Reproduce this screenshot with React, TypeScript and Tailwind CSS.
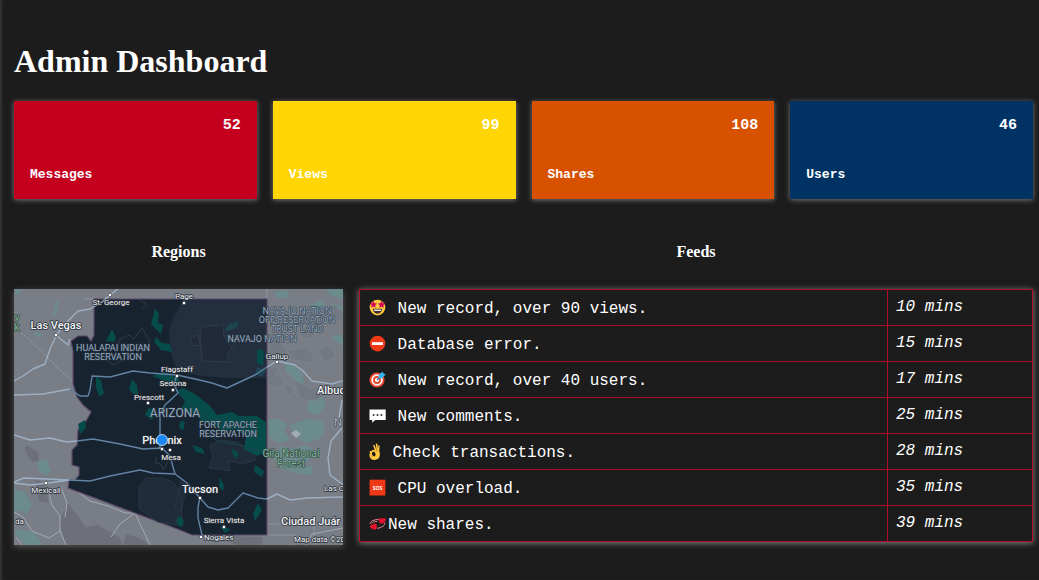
import type { ReactNode } from "react";

const stats = [
  { label: "Messages", value: 52, color: "bg-[#c5001f]" },
  { label: "Views", value: 99, color: "bg-[#ffd504]" },
  { label: "Shares", value: 108, color: "bg-[#d75100]" },
  { label: "Users", value: 46, color: "bg-[#003364]" },
];

function Icon({ children, narrow = false }: { children: ReactNode; narrow?: boolean }) {
  return (
    <svg
      aria-hidden="true"
      viewBox={narrow ? "0 0 11 18" : "0 0 17 18"}
      className={narrow ? "mr-[3px] h-[18px] w-[11px] shrink-0" : "mr-[2px] h-[18px] w-[17px] shrink-0"}
    >
      {children}
    </svg>
  );
}

const starPath = "M0-3.4 1-1.1 3.4-.9 1.6.7 2.1 3.1 0 1.8-2.1 3.1-1.6.7-3.4-.9-1-1.1Z";

const starStruck = (
  <Icon>
    <circle cx="8.5" cy="8.6" r="7.8" fill="#ffc83d" />
    <path d={starPath} transform="translate(4.4 5.4) scale(1.1)" fill="#d1005f" />
    <path d={starPath} transform="translate(12.6 5.4) scale(1.1)" fill="#d1005f" />
    <path d="M3.8 9.800h9.400c0 3-2 4.900-4.700 4.900s-4.700-1.900-4.700-4.900Z" fill="#402a32" />
    <path d="M4.900 10.600h7.200v1.300H4.900Z" fill="#fff" />
  </Icon>
);

const noEntry = (
  <Icon>
    <circle cx="8.5" cy="8.600" r="7.800" fill="#f03a17" />
    <rect x="3" y="7.200" width="11" height="2.800" fill="#fff" />
  </Icon>
);

const target = (
  <Icon>
    <circle cx="8" cy="9" r="7.600" fill="#e9482f" />
    <circle cx="8" cy="9" r="5.700" fill="#fff" />
    <circle cx="8" cy="9" r="4" fill="#e9482f" />
    <circle cx="8" cy="9" r="2.100" fill="#fff" />
    <path d="M8 9 13 4" stroke="#1b6fa8" strokeWidth="1.200" />
    <path d="M9.600 7.400V4.300L13.600.5l.9 2 2.200.9L12.700 7.400Z" fill="#35b5ee" />
  </Icon>
);

const speech = (
  <Icon>
    <path d="M.5 2.500h16.200v10.600H6.300L3.200 15.700v-2.600H.5Z" fill="#fff" />
    <circle cx="4.600" cy="7.900" r="1" fill="#333" />
    <circle cx="8.500" cy="7.900" r="1" fill="#333" />
    <circle cx="12.400" cy="7.900" r="1" fill="#333" />
  </Icon>
);

const okHand = (
  <Icon narrow>
    <g fill="none" stroke="#ffc83d" strokeLinecap="round" strokeLinejoin="round">
      <path d="M7.600 9 4.900 2.600" strokeWidth="1.500" />
      <path d="M8.600 9 7.600 1.300" strokeWidth="1.600" />
      <path d="M9.500 9.500 9.900 3" strokeWidth="1.400" />
      <path d="M6.200 7.800C3.500 7.200 1.600 9.200 1.300 11.800c-.2 1.500.6 2.700 2 3.100" strokeWidth="1.700" />
      <path d="M1.300 8.600c.6 2.100 1.200 4.500 3 5.500" strokeWidth="1.400" />
    </g>
    <path
      d="M5.600 7.800 10.200 8.600c.6 1.100.8 2.500.6 3.900-.4 2.900-2.400 4.400-5.300 4.400-1.900 0-3.500-.6-4.200-1.900l2.300-1.600c1.500.6 2.900-.2 3-1.900 0-1.100-.4-1.900-1.300-2.300Z"
      fill="#ffc83d"
    />
    <path d="M7.100 7.300 7.700 9M8.900 6.800l.1 2.200" stroke="#d98608" strokeWidth=".5" fill="none" />
  </Icon>
);

const sos = (
  <Icon>
    <rect x=".600" y=".700" width="15.800" height="15.800" fill="#f03a17" />
    <text
      x="8.500"
      y="10.500"
      textAnchor="middle"
      className="fill-white font-['Open_Sans',sans-serif] text-[5px] font-bold"
    >
      SOS
    </text>
  </Icon>
);

const hearts = (
  <Icon>
    <path
      d="M9.500 4.500C5 4.500 1.500 6.200 1 8.700M15.800 7.500c.6 2.800-3 5.200-7.500 5.800"
      stroke="#f3919b"
      strokeWidth="1"
      fill="none"
    />
    <path
      d="M12.200 9C9.700 7 9.200 5.100 10 3.700c.8-1.200 2.500-.9 3 .4.900-1.300 2.800-1.500 3.500-.3.900 1.800-1 4-4.300 5.200Z"
      fill="#e8112d"
    />
    <path
      d="M6.700 14.700c-3.600-.2-5.600-1.700-5.600-3.500 0-1.600 1.900-2.300 3-1 .1-1.700 2-2.400 3.100-1.200 1.200 1.400.9 3.800-.5 5.700Z"
      fill="#e8112d"
    />
    <path d="M2.500 8.700C4 6.700 6.500 6.200 8.600 6.500" stroke="#f3919b" strokeWidth=".800" fill="none" />
  </Icon>
);

const feeds = [
  { icon: starStruck, text: "\u00a0New record, over 90 views.", time: "10 mins" },
  { icon: noEntry, text: "\u00a0Database error.", time: "15 mins" },
  { icon: target, text: "\u00a0New record, over 40 users.", time: "17 mins" },
  { icon: speech, text: "\u00a0New comments.", time: "25 mins" },
  { icon: okHand, text: "\u00a0Check transactions.", time: "28 mins" },
  { icon: sos, text: "\u00a0CPU overload.", time: "35 mins" },
  { icon: hearts, text: "New shares.", time: "39 mins" },
];

const stateShape =
  "M94 299H267V535H192L180 530 68 488 69 480H75L79 475V467L72 465V450L77 445 78 430 86 421 91 412 83 405 77 397 73 384V351L71 341 78 336 87 336 91 341 94 335Z";

const cities: { x: number; y: number; name: string; size: "sm" | "lg"; anchor?: "start" | "middle" }[] = [
  { x: 111, y: 305, name: "St. George", size: "sm" },
  { x: 184, y: 299, name: "Page", size: "sm" },
  { x: 56, y: 329, name: "Las Vegas", size: "lg" },
  { x: 277, y: 359, name: "Gallup", size: "sm" },
  { x: 177, y: 372, name: "Flagstaff", size: "sm" },
  { x: 173, y: 386, name: "Sedona", size: "sm" },
  { x: 149, y: 400, name: "Prescott", size: "sm" },
  { x: 162, y: 444, name: "Phoenix", size: "lg" },
  { x: 171, y: 460, name: "Mesa", size: "sm" },
  { x: 46, y: 493, name: "Mexicali", size: "sm" },
  { x: 200, y: 493, name: "Tucson", size: "lg" },
  { x: 224, y: 523, name: "Sierra Vista", size: "sm" },
  { x: 204, y: 540, name: "Nogales", size: "sm", anchor: "start" },
  { x: 317, y: 394, name: "Albuq", size: "lg", anchor: "start" },
  { x: 324, y: 491, name: "Las C", size: "sm", anchor: "start" },
  { x: 281, y: 525, name: "Ciudad Juár", size: "lg", anchor: "start" },
  { x: 15, y: 524, name: "da", size: "sm", anchor: "start" },
];

const areas: { x: number; y: number; name: string }[] = [
  { x: 113, y: 351, name: "HUALAPAI INDIAN" },
  { x: 113, y: 360, name: "RESERVATION" },
  { x: 297, y: 314, name: "NAVAJO NATION" },
  { x: 297, y: 323, name: "OFF-RESERVATION" },
  { x: 297, y: 332, name: "TRUST LAND" },
  { x: 262, y: 342, name: "NAVAJO NATION" },
  { x: 228, y: 428, name: "FORT APACHE" },
  { x: 228, y: 437, name: "RESERVATION" },
];

const dots = [
  [110, 295], [184, 303], [56, 335], [277, 362], [177, 376], [173, 390], [148, 403],
  [162, 449], [170, 450], [46, 483], [200, 498], [224, 527], [201, 537],
];

function RegionMap() {
  return (
    <svg
      role="img"
      aria-label="Map of Arizona"
      viewBox="14 289 329 256"
      className="block h-auto w-full font-[Roboto,sans-serif] shadow-[0_2px_6px_#555]"
    >
      <rect x="14" y="289" width="329" height="256" fill="#787d86" />
      <g fill="#6c8b8d">
        <path d="M56 299 59 304 57 313 52 318 54 308ZM36 331 43 335 39 337 33 334Z" />
        <path d="M36 461 46 459 51 471 47 475 39 472ZM14 489 25 492 32 505 27 514 18 510 14 516ZM20 529 36 533 42 545H25L14 532Z" />
        <path d="M276 291 289 290 286 299 275 297ZM284 362 295 366 303 374 304 387 297 382 286 371ZM268 420 276 418 288 424 284 430 290 440 278 443 270 438ZM290 425 306 419 323 421 325 432 319 439 306 443 294 436ZM279 446 292 449 307 445 316 452 307 462 290 470 281 459ZM331 338 340 334 343 338V346Z" />
        <path d="M310 305 322 300 326 308 315 313ZM14 289H23L18 296ZM313 390 321 397 316 403 307 396ZM325 289H343V300L332 296ZM330 303 343 306V316L334 312ZM268 452 282 450 288 464 300 468 312 466V475L297 473 281 468ZM309 400 322 396 326 404 318 416 307 411Z" />
      </g>
      <path d="M291 433 296 430 301 434 296 438Z" fill="#a4aab8" />
      <g fill="#6d7078">
        <path d="M26 445 38 452 39 461 32 462 25 451ZM35 478 47 487 48 503 39 501ZM68 503 86 527 98 525 120 538 122 545H66L59 522Z" />
        <path d="M126 534 139 538 150 545H123ZM223 536 262 537V545H235Z" />
      </g>
      <g fill="#737982" stroke="#858b93" strokeWidth=".500">
        <path d="M270 337 281 341 288 352 278 359 269 353ZM287 350 305 347 315 354 309 363 291 359ZM293 380 312 388 326 386 330 393 314 401 300 399ZM322 308 335 305 343 312V321L328 318Z" />
        <path d="M268 366 279 368 276 375 284 380 279 389 268 384ZM284 384 293 386 292 396 285 393ZM318 350 330 345 336 356 325 362ZM302 326 316 329 313 339 300 337Z" />
      </g>
      <path d="M15 327 36 346 60 370 74 383" stroke="#a3a5aa" strokeWidth=".700" strokeDasharray="2 1" fill="none" />
      <path d="M267 289V299M94 299H84M267 535H295V545M267 524H314V545" stroke="#999da6" strokeWidth=".700" fill="none" />
      <path
        d="M48 489 52 505 60 516 60 531 66 545M14 512 23 517 32 531 49 538 60 531M16 537 22 545M74 489 90 501 108 506 125 513 135 513M111 537 120 524 135 513 150 545M61 487 67 503 65 517M306 545 312 534 343 528"
        stroke="#a3aab4"
        strokeWidth="1"
        fill="none"
      />

      <path d={stateShape} fill="#182330" stroke="#5f4b6c" strokeWidth="1.200" />
      <path d="M183 300H266V378H228L201 376 178 371 171 355 169 331 173 318Z" fill="#232f3f" />
      <path
        d="M200 330 206 326 224 325 223 335 232 348 227 355 230 362 202 361ZM190 338 198 335 200 345 193 346ZM224 335 235 340 233 350"
        fill="#202a39"
        stroke="#33404e"
        strokeWidth=".800"
      />
      <path
        d="M146 478 163 478 173 482 180 492 183 526 158 522 139 509 139 487ZM210 445 222 440 237 442 252 452 256 460 242 464 229 461 230 471 209 468 213 456ZM181 480 187 486 181 511 175 508Z"
        fill="#212c3a"
        stroke="#303c49"
        strokeWidth=".700"
      />
      <path
        d="M118 350 119 340 129 335 134 339 142 328 149 340 150 348 137 344M105 359 113 365 123 360 130 350M157 457 155 463 161 464 163 470 168 462M140 300 147 305 142 308"
        stroke="#35414f"
        strokeWidth=".800"
        fill="none"
      />
      <g fill="#064c4b">
        <path d="M155 308 159 314 158 323 163 325 161 334 151 324ZM156 337 162 343 170 344 172 352 161 350 154 342ZM112 329 116 337 114 342 106 341Z" />
        <path d="M96 375 101 381 104 393 100 397 96 388ZM132 379 137 385 138 394 133 394 129 389ZM152 376 163 372 178 378 182 387 170 383Z" />
        <path d="M176 391 183 388 195 394 209 405 217 415 232 412 239 416 257 416 266 422V452L257 456 244 449 246 436 235 429 222 432 216 426 203 422 195 414 181 410 185 401Z" />
        <path d="M192 445 202 448 205 454 196 452ZM220 477 224 485 223 491 219 487ZM258 503 262 510 255 521 253 514ZM255 465 264 471 262 477 254 472ZM231 448 239 454 235 459ZM78 424 85 420 86 428 80 434ZM179 515 184 521 181 528 176 522ZM257 349 264 351 263 366 257 363ZM220 527 231 529 225 533ZM181 420 185 423 183 431 179 427ZM149 407 154 412 152 420 145 415Z" />
      </g>
      <path d="M229 324 239 321 237 328 224 332ZM257 367 266 370 262 377 255 374Z" fill="#1d4450" />
      <path
        d="M189 404 198 412 204 417 218 424 237 422 248 433 260 440M206 434 218 441 240 445 260 452"
        stroke="#1d4450"
        strokeWidth="1"
        fill="none"
      />

      <g fill="none" stroke="#9db0c3" strokeWidth="1.400" strokeLinejoin="round">
        <path d="M118 289 110 295 102 302 90 309 78 311 68 321 57 334 50 349 45 364 33 369 23 376 14 381M57 336 68 345 70 339M14 395 43 394 70 389M14 435 30 440 50 438 67 442 77 441M14 482 24 478 69 480M14 483 30 485 48 483 69 480" />
        <path d="M267 367 277 361 295 365 303 371 312 381 332 384 345 380M342 400 339 418M342 428 331 441 328 458 330 475 345 486M267 499 277 494 290 500 308 498 345 497" />
      </g>
      <g fill="none" stroke="#6182a2" strokeWidth="1.400" strokeLinejoin="round">
        <path d="M70 389 80 396 88 396 90 390 92 376 110 377 133 371 150 373 177 375 195 379 212 383 227 388 242 381 255 375 267 367" />
        <path d="M177 375 174 384 178 393 165 405 160 415 160 448M77 441 93 439 120 444 143 449 162 448 170 456 175 474 187 483 200 498 198 507 198 518 202 535" />
        <path d="M69 480 90 481 110 476 140 470 153 473 175 474M200 498 208 507 218 510 228 508 243 493 258 498 267 499" />
      </g>

      <g fill="#fff" stroke="#28313c" strokeWidth=".600">
        {dots.map(([x, y]) => (
          <circle key={`${x}-${y}`} cx={x} cy={y} r="1.700" />
        ))}
      </g>
      <g textAnchor="middle" fill="#93a8bc" stroke="#2a3746" strokeWidth="1" paintOrder="stroke">
        {areas.map((a) => (
          <text key={`${a.name}-${a.y}`} x={a.x} y={a.y} className="text-[9px]">
            {a.name}
          </text>
        ))}
        <text x="175" y="417" className="text-[12px]">
          ARIZONA
        </text>
      </g>
      <g
        textAnchor="middle"
        fill="#83b394"
        stroke="#2f4543"
        strokeWidth="1.200"
        paintOrder="stroke"
        className="text-[10px]"
      >
        <text x="291" y="457">Gila National</text>
        <text x="291" y="467">Forest</text>
        <text x="17" y="321">y</text>
        <text x="17" y="331">k</text>
      </g>
      <text x="334" y="426" fill="#a9b3be" stroke="#3b434e" strokeWidth="1" paintOrder="stroke" className="text-[11px]">
        N
      </text>
      <g fill="#f4f5f6" stroke="#28303a" strokeWidth="1.600" strokeLinejoin="round" paintOrder="stroke">
        {cities.map((c) => (
          <text
            key={c.name}
            x={c.x}
            y={c.y}
            textAnchor={c.anchor ?? "middle"}
            className={c.size === "lg" ? "text-[11px] font-medium" : "text-[8px]"}
          >
            {c.name}
          </text>
        ))}
        <text x="294" y="542" className="text-[8px]">
          Map data ©20
        </text>
      </g>
      <circle cx="162" cy="440" r="5.500" fill="#1a86f2" stroke="#dcebfa" strokeWidth=".800" />
    </svg>
  );
}

export default function App() {
  return (
    <main className="min-h-screen bg-[#1c1c1c] pt-9 pr-1.5 pb-8 pl-3.5 font-['Liberation_Serif',serif] text-white shadow-[inset_3px_0_4px_-3px_#555]">
      <h1 className="mb-4 pt-px text-[32px] leading-12 font-bold">Admin Dashboard</h1>

      <section aria-label="Statistics" className="grid grid-cols-4 gap-4 font-['Liberation_Mono',monospace] font-bold">
        {stats.map((s) => (
          <article
            key={s.label}
            className={`flex min-h-[98px] flex-col justify-between px-4 pt-[13px] pb-3.5 shadow-[0_1px_5px_#777] ${s.color}`}
          >
            <p className="text-right text-[15px] leading-6">{s.value}</p>
            <h2 className="text-[13px] leading-5">{s.label}</h2>
          </article>
        ))}
      </section>

      <div className="mt-[41px] grid grid-cols-3 items-start gap-4">
        <section>
          <h2 className="mb-[25px] text-center text-base leading-6 font-bold">Regions</h2>
          <RegionMap />
        </section>
        <section className="col-span-2">
          <h2 className="mb-[25px] text-center text-base leading-6 font-bold">Feeds</h2>
          <table className="w-full border-collapse font-['Liberation_Mono',monospace] text-base shadow-[0_1px_6px_#888]">
            <tbody>
              {feeds.map((f) => (
                <tr key={f.time} className="h-9">
                  <td className="border border-[#b20a2a] py-0 pr-2 pl-[9px] align-middle">
                    <div className="flex items-center leading-5">
                      {f.icon}
                      <span className="pt-0.5">{f.text}</span>
                    </div>
                  </td>
                  <td className="w-[145px] border border-[#b20a2a] px-2 pt-0 pb-0.5 align-middle leading-5 italic">
                    {f.time}
                  </td>
                </tr>
              ))}
            </tbody>
          </table>
        </section>
      </div>
    </main>
  );
}
